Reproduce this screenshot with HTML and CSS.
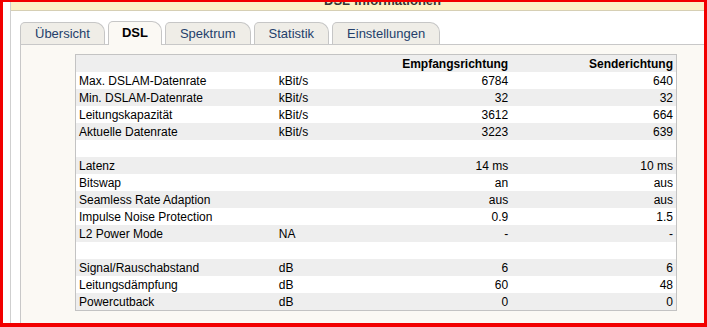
FILE: index.html
```html
<!DOCTYPE html>
<html lang="de">
<head>
  <meta charset="UTF-8" />
  <title>DSL-Informationen</title>
  <link rel="stylesheet" href="styles.css">
</head>
<body>
  <div class="frame">
    <div class="box">
      <!-- Page title bar -->
      <div class="title-bar">
        <span class="title">DSL-Informationen</span>
      </div>

      <div class="content">
        <!-- Tabs -->
        <div class="tabs">
          <a class="tab" href="#">Übersicht</a>
          <a class="tab active" href="#">DSL</a>
          <a class="tab" href="#">Spektrum</a>
          <a class="tab" href="#">Statistik</a>
          <a class="tab" href="#">Einstellungen</a>
        </div>

        <div class="panel">
          <table class="dsl-table">
            <colgroup>
              <col class="col-label">
              <col class="col-unit">
              <col class="col-down">
              <col class="col-up">
            </colgroup>
            <tr class="head">
              <td></td>
              <td></td>
              <td class="num">Empfangsrichtung</td>
              <td class="num">Senderichtung</td>
            </tr>
            <tr><td>Max. DSLAM-Datenrate</td><td>kBit/s</td><td class="num">6784</td><td class="num">640</td></tr>
            <tr><td>Min. DSLAM-Datenrate</td><td>kBit/s</td><td class="num">32</td><td class="num">32</td></tr>
            <tr><td>Leitungskapazität</td><td>kBit/s</td><td class="num">3612</td><td class="num">664</td></tr>
            <tr><td>Aktuelle Datenrate</td><td>kBit/s</td><td class="num">3223</td><td class="num">639</td></tr>
            <tr><td></td><td></td><td></td><td></td></tr>
            <tr><td>Latenz</td><td></td><td class="num">14 ms</td><td class="num">10 ms</td></tr>
            <tr><td>Bitswap</td><td></td><td class="num">an</td><td class="num">aus</td></tr>
            <tr><td>Seamless Rate Adaption</td><td></td><td class="num">aus</td><td class="num">aus</td></tr>
            <tr><td>Impulse Noise Protection</td><td></td><td class="num">0.9</td><td class="num">1.5</td></tr>
            <tr><td>L2 Power Mode</td><td>NA</td><td class="num">-</td><td class="num">-</td></tr>
            <tr><td></td><td></td><td></td><td></td></tr>
            <tr><td>Signal/Rauschabstand</td><td>dB</td><td class="num">6</td><td class="num">6</td></tr>
            <tr><td>Leitungsdämpfung</td><td>dB</td><td class="num">60</td><td class="num">48</td></tr>
            <tr><td>Powercutback</td><td>dB</td><td class="num">0</td><td class="num">0</td></tr>
          </table>
        </div>
      </div>
    </div>
  </div>
</body>
</html>
```

FILE: styles.css
```css
* {
  box-sizing: border-box;
  margin: 0;
  padding: 0;
}

body {
  width: 707px;
  height: 327px;
  overflow: hidden;
  background-color: white;
  font-family: 'Liberation Sans', Arial, sans-serif;
  color: black;
}

.frame {
  width: 707px;
  height: 327px;
  border-style: solid;
  border-color: #f20000;
  border-width: 2px 3px 4px 3px;
  padding-left: 7px;
  display: flex;
  flex-direction: column;
}

.box {
  flex: 1;
  display: flex;
  flex-direction: column;
  border-left: 1px solid #cfcfcf;
}

.title-bar {
  height: 9px;
  background-color: #fcf1c6;
  border-bottom: 1px solid #d6cfb4;
  overflow: hidden;
  text-align: center;
  padding-left: 50px;
}

.title {
  display: block;
  margin-top: -8px;
  font-size: 13px;
  line-height: 14px;
  font-weight: bold;
  color: #333;
}

.content {
  flex: 1;
  display: flex;
  flex-direction: column;
  padding: 10px 0 0 9px;
}

.tabs {
  display: flex;
  align-items: flex-end;
  gap: 3px;
  height: 23px;
}

.tab {
  height: 22px;
  padding: 0 14px;
  line-height: 22px;
  font-size: 13px;
  color: #243f6b;
  text-decoration: none;
  background-color: #efede7;
  border: 1px solid #c6c6c6;
  border-bottom: none;
  border-radius: 5px 10px 0 0;
}

.tab.active {
  position: relative;
  height: 24px;
  margin-bottom: -1px;
  padding: 0 13px;
  line-height: 22px;
  font-weight: bold;
  color: black;
  background-color: #fbf9f4;
  z-index: 1;
}

.panel {
  flex: 1;
  background-color: #fbf9f4;
  border-top: 1px solid #c8c8c8;
  border-left: 1px solid #c8c8c8;
  padding: 9px 0 0 54px;
}

.dsl-table {
  width: 602px;
  table-layout: fixed;
  border-collapse: collapse;
  border: 1px solid #c3c3c3;
  background-color: white;
  font-size: 12px;
}

.col-label { width: 200px; }
.col-unit { width: 100px; }
.col-down { width: 135px; }
.col-up { width: 165px; }

.dsl-table td {
  height: 17px;
  padding: 1px 3px 0 3px;
  line-height: 16px;
  white-space: nowrap;
}

.dsl-table tr:nth-child(odd) {
  background-color: #eeeeee;
}

.dsl-table .head td {
  font-weight: bold;
}

.dsl-table .num {
  text-align: right;
}
```
